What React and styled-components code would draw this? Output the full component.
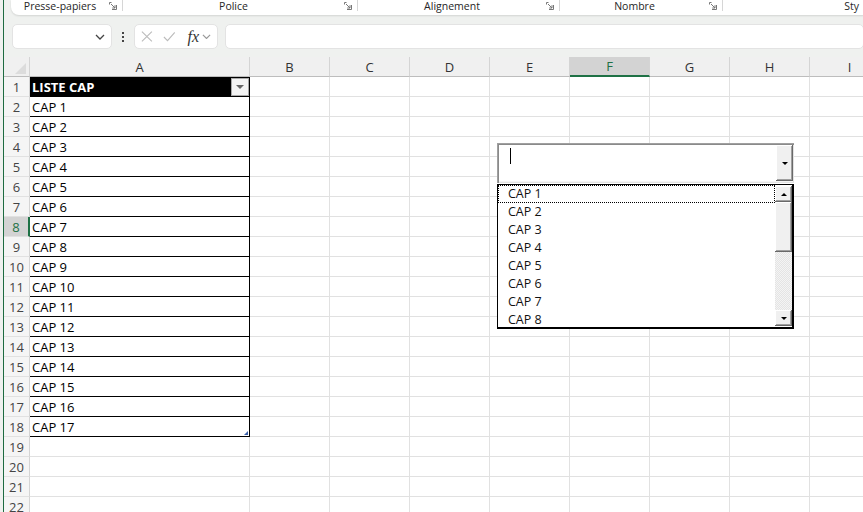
import React from 'react';
import styled, { createGlobalStyle } from 'styled-components';

const GlobalStyle = createGlobalStyle`
  html, body { margin: 0; padding: 0; background: #eff1ef; }
  body { font-family: "Open Sans", "Noto Sans", sans-serif; }
`;

const COLS = ['A', 'B', 'C', 'D', 'E', 'F', 'G', 'H', 'I'];
const ROWS = 22;
const caps = Array.from({ length: 17 }, (_, i) => 'CAP ' + (i + 1));
const SELECTED_COL = 'F';
const SELECTED_ROW = 8;

const Frame = styled.div`
  width: 860px;
  height: 512px;
  margin-left: 3px;
  border-left: 1px solid #1e6b41;
  background: #eff1ef;
  overflow: hidden;
  display: flex;
  flex-direction: column;
  & > * { flex-shrink: 0; }
`;

const RibbonStrip = styled.div`
  height: 15px;
  padding-left: 7px;
  display: flex;
`;

const RibbonPanel = styled.div`
  flex: 1;
  display: flex;
  background: #fff;
  border-bottom-left-radius: 8px;
  box-shadow: 0 1px 2px rgba(0, 0, 0, 0.12);
  overflow: hidden;
`;

const Group = styled.div`
  width: ${p => p.w ? p.w + 'px' : 'auto'};
  flex: ${p => p.w ? 'none' : 1};
  display: flex;
  align-items: flex-start;
  border-right: ${p => p.last ? 'none' : '1px solid #d6d6d6'};
  height: 11px;
  padding-right: 5px;
  box-sizing: border-box;
`;

const GroupLabel = styled.div`
  flex: 1;
  text-align: ${p => p.align || 'center'};
  font-size: 10.5px;
  line-height: 12px;
  color: #262626;
  white-space: nowrap;
`;

const Launcher = () => (
  <svg width="8" height="8" viewBox="0 0 8 8" style={{ marginTop: 2 }}>
    <path d="M0.5 2.5 V0.5 H2.5 M7.5 3 V7.5 H3" stroke="#777" fill="none" />
    <path d="M2 2 L6 6 M6 3.2 V6 H3.2" stroke="#777" fill="none" />
  </svg>
);

const FormulaBar = styled.div`
  display: flex;
  align-items: center;
  height: 25px;
  margin-top: 9px;
  padding-left: 8px;
`;

const Box = styled.div`
  height: 25px;
  width: ${p => p.w ? p.w + 'px' : 'auto'};
  flex: ${p => p.w ? 'none' : 1};
  background: #fff;
  border: 1px solid #e3e3e3;
  border-radius: 5px;
  box-sizing: border-box;
  display: flex;
  align-items: center;
  justify-content: ${p => p.justify || 'flex-start'};
  padding: 0 6px;
  gap: 10px;
  margin-right: ${p => p.mr || 0}px;
`;

const Dots = styled.div`
  width: 22px;
  display: flex;
  flex-direction: column;
  align-items: center;
  gap: 2px;
  span { width: 2px; height: 2px; background: #444; }
`;

const Fx = styled.span`
  font-family: "Liberation Serif", serif;
  font-style: italic;
  font-size: 16px;
  color: #333;
  margin-left: 2px;
`;

const Chevron = ({ color = '#444', size = 10 }) => (
  <svg width={size} height={size * 0.6} viewBox="0 0 10 6">
    <path d="M1 1 L5 5 L9 1" stroke={color} strokeWidth="1.3" fill="none" />
  </svg>
);

const Sheet = styled.div`
  position: relative;
  margin-top: 8px;
  background: #fff;
  display: grid;
  grid-template-columns: 26px 220px repeat(8, 80px);
  grid-auto-rows: 20px;
  align-content: start;
`;

const ColHead = styled.div`
  background: ${p => p.sel ? '#d3d3d3' : '#f0f0f0'};
  border-right: 1px solid #d4d4d4;
  border-bottom: ${p => p.sel ? '2px solid #1e7145' : '1px solid #bdbdbd'};
  box-sizing: border-box;
  display: flex;
  align-items: center;
  justify-content: center;
  font-size: 13px;
  color: ${p => p.sel ? '#1e7145' : '#333'};
`;

const Corner = styled.div`
  background: #f0f0f0;
  border-right: 1px solid #d4d4d4;
  border-bottom: 1px solid #bdbdbd;
  box-sizing: border-box;
  display: flex;
  align-items: flex-end;
  justify-content: flex-end;
  padding: 0 3px 2px 0;
`;

const RowHead = styled.div`
  background: ${p => p.sel ? '#d3d3d3' : '#f5f5f5'};
  border-right: ${p => p.sel ? '2px solid #1e7145' : '1px solid #d4d4d4'};
  border-bottom: 1px solid #e1e1e1;
  box-sizing: border-box;
  display: flex;
  align-items: center;
  justify-content: center;
  font-size: 13px;
  color: ${p => p.sel ? '#1e7145' : '#444'};
`;

const Cell = styled.div`
  border-right: 1px solid ${p => p.table ? '#000' : '#e1e1e1'};
  border-bottom: 1px solid ${p => p.table ? '#000' : '#e1e1e1'};
  background: ${p => p.head ? '#000' : '#fff'};
  color: ${p => p.head ? '#fff' : '#000'};
  font-weight: ${p => p.head ? 700 : 400};
  box-sizing: border-box;
  font-size: 13px;
  padding-left: 2px;
  display: flex;
  align-items: center;
  justify-content: space-between;
  white-space: nowrap;
  position: relative;
`;

const FilterButton = styled.div`
  width: 18px;
  height: 18px;
  background: #f3f3f3;
  border: 1px solid #a8a8a8;
  box-sizing: border-box;
  display: flex;
  align-items: center;
  justify-content: center;
`;

const Triangle = styled.span`
  width: 0;
  height: 0;
  border-left: ${p => p.s || 4}px solid transparent;
  border-right: ${p => p.s || 4}px solid transparent;
  border-${p => p.up ? 'bottom' : 'top'}: ${p => p.s || 4}px solid ${p => p.c || '#555'};
`;

const ResizeHandle = styled.span`
  position: absolute;
  right: 1px;
  bottom: 1px;
  width: 0;
  height: 0;
  border-left: 4px solid transparent;
  border-bottom: 4px solid #3a5fa8;
`;

const CornerTri = styled.span`
  width: 0;
  height: 0;
  border-left: 11px solid transparent;
  border-bottom: 11px solid #dcdcdc;
`;

const ComboWrap = styled.div`
  position: absolute;
  left: 493px;
  top: 86px;
  width: 297px;
  font-family: "Open Sans", "Noto Sans", sans-serif;
`;

const ComboField = styled.div`
  height: 40px;
  background: #fff;
  box-sizing: border-box;
  box-shadow: inset 1px 1px #a0a0a0, inset 2px 2px #8a8a8a, inset -1px -1px #e3e3e3, inset -2px -2px #f5f5f5;
  display: flex;
  align-items: stretch;
  padding: 2px 1px 2px 2px;
`;

const Caret = styled.div`
  flex: 1;
  position: relative;
  &::before {
    content: '';
    position: absolute;
    left: 11px;
    top: 3px;
    width: 1px;
    height: 16px;
    background: #000;
  }
`;

const Bevel = styled.div`
  width: 17px;
  height: ${p => p.h ? p.h + 'px' : 'auto'};
  background: #f0f0f0;
  box-shadow: inset -1px -1px #696969, inset 1px 1px #fff, inset -2px -2px #a0a0a0;
  display: flex;
  align-items: center;
  justify-content: center;
  box-sizing: border-box;
`;

const ListBox = styled.div`
  height: 145px;
  margin-top: 1px;
  border: 1px solid #000;
  border-bottom-width: 2px;
  border-right-width: 2px;
  background: #fff;
  box-sizing: border-box;
  display: flex;
`;

const Items = styled.div`
  flex: 1;
  overflow: hidden;
`;

const Item = styled.div`
  height: 18px;
  line-height: 17px;
  padding-left: 10px;
  font-size: 12.5px;
  color: #111;
  box-sizing: border-box;
  outline: ${p => p.focus ? '1px dotted #000' : 'none'};
  outline-offset: -1px;
`;

const ScrollBar = styled.div`
  width: 17px;
  display: flex;
  flex-direction: column;
  padding: 1px 0;
`;

const Track = styled.div`
  flex: 1;
  background-image: repeating-conic-gradient(#f4f4f4 0 25%, #e4e4e4 0 50%);
  background-size: 2px 2px;
`;

const Thumb = styled(Bevel)`
  height: 50px;
  width: 17px;
`;

export default function App() {
  const rows = [];
  for (let r = 1; r <= ROWS; r++) {
    rows.push(<RowHead key={'h' + r} sel={r === SELECTED_ROW}>{r}</RowHead>);
    COLS.forEach(c => {
      const key = c + r;
      if (c === 'A' && r === 1) {
        rows.push(
          <Cell key={key} table head>
            LISTE CAP
            <FilterButton><Triangle s={4} c="#666" /></FilterButton>
          </Cell>
        );
      } else if (c === 'A' && r <= 18) {
        rows.push(
          <Cell key={key} table>
            {caps[r - 2]}
            {r === 18 && <ResizeHandle />}
          </Cell>
        );
      } else {
        rows.push(<Cell key={key} />);
      }
    });
  }

  return (
    <>
      <GlobalStyle />
      <Frame>
        <RibbonStrip>
          <RibbonPanel>
            <Group w={112}><GroupLabel>Presse-papiers</GroupLabel><Launcher /></Group>
            <Group w={235}><GroupLabel>Police</GroupLabel><Launcher /></Group>
            <Group w={202}><GroupLabel>Alignement</GroupLabel><Launcher /></Group>
            <Group w={163}><GroupLabel>Nombre</GroupLabel><Launcher /></Group>
            <Group last><GroupLabel align="right">Sty</GroupLabel></Group>
          </RibbonPanel>
        </RibbonStrip>

        <FormulaBar>
          <Box w={100} justify="flex-end"><Chevron /></Box>
          <Dots><span /><span /><span /></Dots>
          <Box w={84} mr={7}>
            <svg width="13" height="13" viewBox="0 0 13 13">
              <path d="M1 1 L12 12 M12 1 L1 12" stroke="#bbb" strokeWidth="1.2" />
            </svg>
            <svg width="14" height="12" viewBox="0 0 14 12">
              <path d="M1 6 L5 10 L13 1" stroke="#bbb" strokeWidth="1.2" fill="none" />
            </svg>
            <span style={{ display: 'flex', alignItems: 'center', gap: 3 }}>
              <Fx>fx</Fx>
              <Chevron color="#999" size={9} />
            </span>
          </Box>
          <Box />
        </FormulaBar>

        <Sheet>
          <Corner><CornerTri /></Corner>
          {COLS.map(c => <ColHead key={c} sel={c === SELECTED_COL}>{c}</ColHead>)}
          {rows}

          <ComboWrap>
            <ComboField>
              <Caret />
              <Bevel><Triangle s={3.5} c="#000" /></Bevel>
            </ComboField>
            <ListBox>
              <Items>
                {caps.slice(0, 8).map((t, i) => (
                  <Item key={t} focus={i === 0}>{t}</Item>
                ))}
              </Items>
              <ScrollBar>
                <Bevel h={16}><Triangle up s={3.5} c="#000" /></Bevel>
                <Thumb />
                <Track />
                <Bevel h={16}><Triangle s={3.5} c="#000" /></Bevel>
              </ScrollBar>
            </ListBox>
          </ComboWrap>
        </Sheet>
      </Frame>
    </>
  );
}
